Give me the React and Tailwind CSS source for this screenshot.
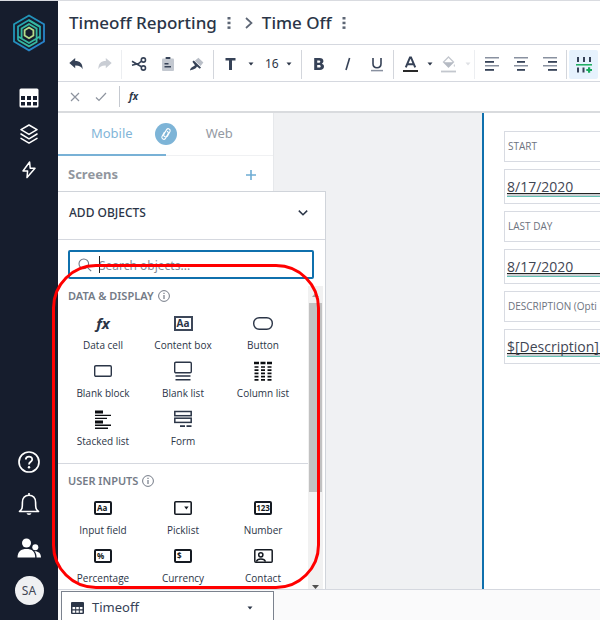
import React from "react";

const ink = "#364257";

function Svg({ w, h, children, className = "", ...rest }) {
  return (
    <svg width={w} height={h} viewBox={`0 0 ${w} ${h}`} fill="none" className={`shrink-0 ${className}`} aria-hidden="true" {...rest}>
      {children}
    </svg>
  );
}

function Logo() {
  return (
    <Svg w={34} h={38} strokeWidth="1.8">
      <defs>
        <linearGradient id="outer" x1="0" y1="0" x2="1" y2="1">
          <stop offset="0" stopColor="#1f9bb0" />
          <stop offset="1" stopColor="#2a7fd0" />
        </linearGradient>
      </defs>
      <path d="M17 1.5L32 10.2V27.6L17 36.4L2 27.6V10.2Z" stroke="url(#outer)" />
      <path d="M6 26V12.4L17 6L28 12.4V25.4" stroke="#27a6b0" />
      <path d="M6 22.5L17 29L28 22.5M6 26L17 32.4L24.6 28V14.6L17 10.1L9.6 14.4V24" stroke="#35b8a0" />
      <path d="M17 6.5L28 13" stroke="#35b8a0" />
      <path d="M17 13.6L21.4 16.2V21.6L17 24.2L12.6 21.6V16.2Z" stroke="#b4dc8a" />
    </Svg>
  );
}

function Caret({ color = "#2c3648" }) {
  return (
    <Svg w={6} h={4}>
      <path d="M0.5 0.5H5.5L3 3.5Z" fill={color} />
    </Svg>
  );
}

function Dots() {
  return (
    <Svg w={4} h={14}>
      <rect x="0.5" y="1" width="3" height="2.5" fill="#5d6675" />
      <rect x="0.5" y="5.7" width="3" height="2.5" fill="#5d6675" />
      <rect x="0.5" y="10.4" width="3" height="2.5" fill="#5d6675" />
    </Svg>
  );
}

function Fx({ className }) {
  return <span className={`font-['Noto_Sans',sans-serif] font-bold italic ${className}`}>fx</span>;
}

function RailButton({ label, children, className = "" }) {
  return (
    <button type="button" aria-label={label} className={`flex w-full items-center justify-center ${className}`}>
      {children}
    </button>
  );
}

function Rail() {
  return (
    <nav className="flex w-[58px] shrink-0 flex-col items-center bg-[#161d2d] pt-[13px] pb-2">
      <a href="#home" aria-label="Home"><Logo /></a>
      <div className="mt-7 flex w-full flex-col">
        <RailButton label="Tables" className="h-9">
          <Svg w={20} h={20}>
            <rect x="0.5" y="0.5" width="19" height="19" rx="1.5" fill="#fff" />
            <path d="M2 8h4v4H2zM8 8h4v4H8zM14 8h4v4h-4zM2 14h4v3.5H2zM8 14h4v3.5H8zM14 14h4v3.5h-4z" fill="#161d2d" />
          </Svg>
        </RailButton>
        <RailButton label="Apps" className="h-9">
          <Svg w={18} h={20} stroke="#fff" strokeWidth="1.5" strokeLinejoin="round" strokeLinecap="round">
            <path d="M9 1L17 5.7L9 10.4L1 5.7Z M1 10L9 14.8L17 10M1 14.3L9 19.1L17 14.3" />
          </Svg>
        </RailButton>
        <RailButton label="Automations" className="h-9">
          <Svg w={14} h={18} stroke="#fff" strokeWidth="1.5" strokeLinejoin="round">
            <path d="M7.6 1L1 10H5.6L5 16.6L13 7.2H8.2Z" />
          </Svg>
        </RailButton>
      </div>
      <div className="mt-auto flex w-full flex-col">
        <RailButton label="Help" className="h-[43px]">
          <Svg w={22} h={22} stroke="#fff" strokeWidth="1.7">
            <circle cx="11" cy="11" r="10" />
            <path d="M7.8 8.6C7.8 4.6 14.2 4.6 14.2 8.4C14.2 10.8 11 10.8 11 13.4" strokeWidth="1.8" />
            <circle cx="11" cy="16.2" r="1.2" fill="#fff" stroke="none" />
          </Svg>
        </RailButton>
        <RailButton label="Notifications" className="h-[43px]">
          <Svg w={22} h={24} stroke="#fff" strokeWidth="1.6" strokeLinejoin="round">
            <path d="M1.5 18.5C4.5 16.5 4.4 14 4.4 9.5C4.4 5 7 2.2 11 2.2S17.6 5 17.6 9.5C17.6 14 17.5 16.5 20.5 18.5Z" />
            <path d="M11 0V2" />
            <path d="M8.6 20.3H13.4C13 22.6 9 22.6 8.6 20.3Z" fill="#fff" stroke="none" />
          </Svg>
        </RailButton>
        <RailButton label="Team" className="h-[43px]">
          <Svg w={24} h={20}>
            <g fill="#fff">
              <circle cx="9.5" cy="5" r="4.5" />
              <path d="M0.5 19.5C0.5 13.5 4 11 9.5 11S18.2 13.5 18.2 19.5Z" />
              <circle cx="18.3" cy="9.3" r="3" />
              <path d="M17.4 13.3C21.5 13.2 24 15.4 24 19.5H19.6C19.6 17 19 14.8 17.4 13.3Z" />
            </g>
          </Svg>
        </RailButton>
        <RailButton label="Account" className="h-[43px]">
          <span className="flex size-[29px] items-center justify-center rounded-full bg-[#eff0f2] text-xs text-[#3f4654]">SA</span>
        </RailButton>
      </div>
    </nav>
  );
}

function Header() {
  return (
    <header className="flex h-11 shrink-0 items-center border-b border-[#d5d8df] pl-[11px] text-[17px] font-medium text-[#2b3547]">
      <h1>Timeoff Reporting</h1>
      <button type="button" aria-label="App menu" className="flex w-6 justify-center"><Dots /></button>
      <Svg w={8} h={12} className="mx-1" stroke="#5d6675" strokeWidth="1.7">
        <path d="M1 1L6.5 6L1 11" />
      </Svg>
      <h2 className="ml-[5px]">Time Off</h2>
      <button type="button" aria-label="Screen menu" className="flex w-6 justify-center"><Dots /></button>
    </header>
  );
}

function Tool({ label, active, children }) {
  return (
    <button
      type="button"
      aria-label={label}
      className={`flex h-[29px] w-[29px] shrink-0 items-center justify-center ${active ? "rounded-xs bg-[#e6f2fd]" : ""}`}
    >
      {children}
    </button>
  );
}

function MenuCaret({ label, color, wide }) {
  return (
    <button type="button" aria-label={label} className={`flex h-[29px] shrink-0 items-center justify-center ${wide ? "w-3" : "w-[9px]"}`}>
      <Caret color={color} />
    </button>
  );
}

function Rule({ light }) {
  return <span className={`mx-[2px] h-[29px] w-px shrink-0 ${light ? "bg-[#eceef1]" : "bg-[#d3d6dc]"}`} />;
}

function Align({ rows }) {
  return (
    <Svg w={16} h={14}>
      {rows.map(([x, w], i) => (
        <rect key={i} x={x} y={i * 4} width={w} height={i % 2 ? 1.8 : 1.5} fill={i % 2 ? "#364257" : "#8991a0"} />
      ))}
    </Svg>
  );
}

function Toolbar() {
  return (
    <div role="toolbar" aria-label="Formatting" className="flex h-[37px] shrink-0 items-center overflow-hidden border-b border-[#d5d8df] pt-[2px] pl-[3px] text-[#364257]">
      <Tool label="Undo">
        <Svg w={14} h={12}><path d="M0.3 5L6.2 0V3C11 3 13.7 5.5 13.6 11.2C12.3 8.5 10.3 7.4 6.2 7.5V10.2Z" fill={ink} /></Svg>
      </Tool>
      <Tool label="Redo">
        <Svg w={14} h={12}><path d="M13.7 5L7.8 0V3C3 3 .3 5.5 .4 11.2C1.7 8.5 3.7 7.4 7.8 7.5V10.2Z" fill="#c9cdd4" /></Svg>
      </Tool>
      <Rule light />
      <Tool label="Cut">
        <Svg w={16} h={14} stroke={ink} strokeWidth="1.6">
          <circle cx="12.4" cy="3" r="2.1" />
          <circle cx="12.4" cy="11" r="2.1" />
          <path d="M10.5 9.8L1 4.2M10.5 4.2L7.5 6.6L1 8.2" />
        </Svg>
      </Tool>
      <Tool label="Paste">
        <Svg w={12} h={14}>
          <rect x="0" y="1.5" width="12" height="12.5" rx="1" fill="#c3c8d0" />
          <rect x="3.5" y="0" width="5" height="2" rx="0.8" fill={ink} />
          <path d="M2.5 6.7H6.5M2.5 9.7H9" stroke={ink} strokeWidth="1.4" />
        </Svg>
      </Tool>
      <Tool label="Paint format">
        <Svg w={15} h={14}>
          <path d="M5.8 3.8L9.4 0.8L14.4 5.6L11.6 9Z" fill="#b9bec7" />
          <path d="M1 13.5C1.4 10.5 3.4 10.3 6 8.2L3.4 4.8L4.8 3.6L12 10.6L10.8 11.8L8 9.6C6.2 12.4 4.4 12.4 1 13.5Z" fill={ink} />
        </Svg>
      </Tool>
      <Rule />
      <Tool label="Text style">
        <Svg w={12} h={12}><path d="M0.5 0H10.5V2.6H7V12H4V2.6H0.5Z" fill={ink} /></Svg>
      </Tool>
      <MenuCaret label="Text style menu" wide />
      <div className="relative w-[42px] shrink-0">
        <select aria-label="Font size" defaultValue="16" className="h-[29px] w-full appearance-none bg-transparent pl-2 text-xs text-[#2b3547]">
          <option>14</option>
          <option>16</option>
          <option>18</option>
        </select>
        <span className="pointer-events-none absolute inset-y-0 right-[7px] flex items-center"><Caret /></span>
      </div>
      <Rule />
      <Tool label="Bold">
        <Svg w={12} h={14}>
          <path d="M1.2 1H6.6C9 1 10.4 2.2 10.4 4.1C10.4 5.4 9.8 6.2 8.8 6.7C10.2 7.1 11 8.1 11 9.6C11 11.8 9.4 13 6.8 13H1.2ZM4.2 3.4V5.8H6C7.8 5.8 7.8 3.4 6 3.4ZM4.2 8V10.6H6.2C8.2 10.6 8.2 8 6.2 8Z" fill={ink} fillRule="evenodd" />
        </Svg>
      </Tool>
      <Tool label="Italic">
        <Svg w={8} h={14}><path d="M5.6 1L2 13" stroke={ink} strokeWidth="1.6" /></Svg>
      </Tool>
      <Tool label="Underline">
        <Svg w={12} h={15}>
          <path d="M2 1V6.8C2 12 10 12 10 6.8V1" stroke={ink} strokeWidth="1.6" />
          <path d="M0 13.6H12" stroke="#8991a0" strokeWidth="1.5" />
        </Svg>
      </Tool>
      <Rule />
      <Tool label="Text colour">
        <Svg w={15} h={16}>
          <path d="M2.8 11.4L7 1.4H8L12.2 11.4M4.4 8.2H10.6" stroke={ink} strokeWidth="2" />
          <path d="M0 15H15" stroke="#111" strokeWidth="1.8" />
        </Svg>
      </Tool>
      <MenuCaret label="Text colour menu" />
      <Tool label="Fill colour">
        <Svg w={15} h={17}>
          <path d="M7.5 1L12.5 6L7.5 11L2.5 6Z" stroke="#c3c7ce" strokeWidth="1.3" />
          <path d="M2.4 6.2H12.6L7.5 11.4Z" fill="#b5bac3" />
          <path d="M13.2 8C15.4 11.6 11.4 11.6 13.2 8Z" fill="#c3c7ce" />
          <path d="M0 15.5H15" stroke="#c3c7ce" strokeWidth="1.8" />
        </Svg>
      </Tool>
      <MenuCaret label="Fill colour menu" color="#dfe1e5" />
      <Rule light />
      <Tool label="Align left"><Align rows={[[1, 14], [1, 9], [1, 14], [1, 9]]} /></Tool>
      <Tool label="Align centre"><Align rows={[[1, 14], [4, 8], [1, 14], [4, 8]]} /></Tool>
      <Tool label="Align right"><Align rows={[[1, 14], [6, 9], [1, 14], [6, 9]]} /></Tool>
      <Rule />
      <Tool label="Insert row" active>
        <Svg w={16} h={17}>
          <path d="M2 1V6M8 1V6M14 1V6M2 11.5V16.5M7.5 11.5V16.5" stroke={ink} strokeWidth="2" />
          <path d="M0 8.8H16" stroke="#18ab5c" strokeWidth="1.5" />
          <path d="M10.3 14H16M13.1 11.2V16.8" stroke="#18ab5c" strokeWidth="2.2" />
        </Svg>
      </Tool>
    </div>
  );
}

function FormulaBar() {
  return (
    <div className="flex h-[31px] shrink-0 items-center border-b-2 border-[#d9dbde] pl-1">
      <button type="button" aria-label="Cancel" className="flex w-[26px] justify-center">
        <Svg w={10} h={10} stroke="#8d939e" strokeWidth="1.2"><path d="M1 1L9 9M9 1L1 9" /></Svg>
      </button>
      <button type="button" aria-label="Accept" className="flex w-[26px] justify-center">
        <Svg w={12} h={10} stroke="#8d939e" strokeWidth="1.2"><path d="M1 5.5L4 8.5L11 1" /></Svg>
      </button>
      <span className="ml-[5px] h-[21px] w-px bg-[#c5c9d0]" />
      <label htmlFor="formula" className="ml-[9px] flex"><Fx className="text-[10px] text-[#2b3547]" /></label>
      <input id="formula" aria-label="Formula" className="ml-2 h-6 min-w-0 flex-1 outline-none" />
    </div>
  );
}

function ScreensPanel() {
  return (
    <aside className="w-[216px] shrink-0 border-r border-[#e6e8eb] bg-white text-[13px]">
      <div role="tablist" className="relative flex h-[43px] border-b border-[#f0f1f3]">
        <button role="tab" aria-selected="true" type="button" className="-mb-px flex-1 border-b-2 border-[#78b1d6] text-[#82b5d8]">Mobile</button>
        <button role="tab" aria-selected="false" type="button" className="flex-1 text-[#949aa3]">Web</button>
        <span className="absolute top-[10px] left-1/2 flex size-[22px] -translate-x-1/2 items-center justify-center rounded-full bg-[#7db4d7]">
          <Svg w={12} h={14} stroke="#fff" strokeWidth="1.1" strokeLinecap="round">
            <path d="M4.6 9.6C3.4 9 3.6 7.6 4.2 6.6L6.6 2.6C7.8 .8 11 2 10 4.6L7.8 8.6C7.2 9.6 6.4 9.8 5.8 9.6M7.4 4.4C8.6 5 8.4 6.4 7.8 7.4L5.4 11.4C4.2 13.2 1 12 2 9.4L4.2 5.4" />
          </Svg>
        </span>
      </div>
      <div className="flex h-[37px] items-center justify-between pr-[17px] pl-[10px]">
        <h3 className="font-bold text-[#91969e]">Screens</h3>
        <button type="button" aria-label="Add screen">
          <Svg w={10} h={10} stroke="#6fadd4" strokeWidth="1.6"><path d="M5 0V10M0 5H10" /></Svg>
        </button>
      </div>
    </aside>
  );
}

function InputGlyph({ text, center }) {
  return (
    <span className={`flex h-[14px] w-[18px] items-center rounded-xs border-2 border-[#151a22] text-[8px] leading-none font-bold text-[#151a22] ${center ? "justify-center" : "pl-px"}`}>
      {text}
    </span>
  );
}

const dark = "#2b3547";

const displayObjects = [
  ["Data cell", <Fx className="text-[15px] leading-none text-[#2b3547]" />],
  ["Content box", <span className="flex h-[15px] w-[19px] items-center justify-center border-2 border-[#3d4759] text-[10px] leading-none font-bold text-[#2b3547]">Aa</span>],
  ["Button", <Svg w={20} h={13} stroke={dark} strokeWidth="1.4"><rect x="0.7" y="0.7" width="18.6" height="11.6" rx="5.5" /></Svg>],
  ["Blank block", <Svg w={18} h={12} stroke={dark} strokeWidth="1.4"><rect x="0.7" y="0.7" width="16.6" height="10.6" rx="1.2" /></Svg>],
  ["Blank list", <Svg w={18} h={20} stroke={dark} strokeWidth="1.4"><rect x="0.7" y="1.2" width="16.6" height="10.6" rx="1.2" /><path d="M1.5 15H16.5M1.5 18.8H16.5" /></Svg>],
  ["Column list", (
    <Svg w={18} h={20} stroke="#0b0d10">
      <path d="M0 2H5M6.5 2H11.5M13 2H18" strokeWidth="2.6" />
      <path d="M0.5 6H4.5M7 6H11M13.5 6H17.5M0.5 9.2H4.5M7 9.2H11M13.5 9.2H17.5M0.5 12.4H4.5M7 12.4H11M13.5 12.4H17.5M0.5 15.6H4.5M7 15.6H11M13.5 15.6H17.5M0.5 18.8H4.5M7 18.8H11M13.5 18.8H17.5" strokeWidth="1.7" />
    </Svg>
  )],
  ["Stacked list", (
    <Svg w={18} h={19} stroke="#0b0d10">
      <path d="M1 2H9M1 12H9" strokeWidth="2.8" />
      <path d="M1 5.4H17M1 8.4H13M1 15.2H17M1 18.2H14" strokeWidth="1.4" />
    </Svg>
  )],
  ["Form", (
    <Svg w={18} h={18} stroke={dark} strokeWidth="1.5">
      <rect x="0.8" y="1.5" width="16.4" height="4.2" />
      <rect x="0.8" y="8.2" width="16.4" height="4.2" />
      <path d="M6 16.2H11M12.5 16.2H17.5" strokeWidth="1.7" />
    </Svg>
  )],
];

const inputObjects = [
  ["Input field", <InputGlyph text="Aa" />],
  ["Picklist", <Svg w={18} h={14} stroke="#151a22" strokeWidth="1.6"><rect x="0.8" y="0.8" width="16.4" height="12.4" rx="1" /><path d="M10.2 5.6H14.6L12.4 8.6Z" fill="#151a22" stroke="none" /></Svg>],
  ["Number", <InputGlyph text="123" center />],
  ["Percentage", <InputGlyph text="%" />],
  ["Currency", <InputGlyph text="$" />],
  ["Contact", <Svg w={19} h={14} stroke="#151a22" strokeWidth="1.5"><rect x="0.8" y="0.8" width="17.4" height="12.4" rx="1" /><circle cx="6.8" cy="5.8" r="2.1" /><path d="M2.4 12.6C3.4 9.2 10.4 9.2 11.4 12.6" /></Svg>],
];

function ObjectGroup({ title, items, className }) {
  return (
    <section className={className}>
      <h4 className="mb-[5px] flex h-5 items-center gap-1 pl-[10px] text-[11px] font-semibold text-[#747b87]">
        {title}
        <Svg w={12} h={12} stroke="#747b87">
          <circle cx="6" cy="6" r="5.4" />
          <path d="M6 5V9M6 2.8V4" strokeWidth="1.2" />
        </Svg>
      </h4>
      <div className="grid grid-cols-3 px-[5px]">
        {items.map(([name, icon]) => (
          <button key={name} type="button" className="flex h-12 flex-col items-center font-['Open_Sans',sans-serif] text-[10px] whitespace-nowrap text-[#2b3547]">
            <span className="flex h-6 items-center">{icon}</span>
            <span className="leading-5">{name}</span>
          </button>
        ))}
      </div>
    </section>
  );
}

function ObjectsPanel() {
  return (
    <section className="absolute top-[78px] bottom-0 left-0 z-10 flex w-[268px] flex-col border-t border-r border-[#d0d4da] bg-white">
      <button type="button" aria-expanded="true" className="flex h-[48px] shrink-0 items-center justify-between border-b border-[#d5d8df] pr-[17px] pb-[5px] pl-[11px] text-xs font-medium text-[#2b3547]">
        ADD OBJECTS
        <Svg w={10} h={6} stroke={dark} strokeWidth="1.5"><path d="M0.8 0.6L5 4.8L9.2 0.6" /></Svg>
      </button>
      <div className="relative mt-[10px] mr-[11px] mb-[7px] ml-[10px] h-[29px] shrink-0">
        <label htmlFor="search" className="absolute top-[8px] left-[10px]">
          <Svg w={14} h={14} stroke="#6f7784" strokeWidth="1.1"><circle cx="5.8" cy="5.8" r="4.8" /><path d="M9.3 9.3L13.2 13.2" /></Svg>
        </label>
        <input
          id="search"
          type="text"
          aria-label="Search objects"
          placeholder="Search objects..."
          className="h-full w-full rounded-xs border-2 border-[#0f70ad] bg-transparent pt-px pl-[29px] text-xs text-[#364257] outline-none placeholder:text-[#858b95]"
        />
        <span className="absolute top-[6px] left-[31px] h-[17px] w-px bg-[#222]" />
      </div>
      <div className="flex min-h-0 flex-1">
        <div className="min-w-0 flex-1 overflow-hidden">
          <ObjectGroup title="DATA & DISPLAY" items={displayObjects} className="pb-2" />
          <ObjectGroup title="USER INPUTS" items={inputObjects} className="border-t border-[#d5d8df] pt-[7px]" />
        </div>
        <div className="mr-[2px] flex w-[15px] flex-col items-center bg-[#f1f1f1]">
          <span className="flex h-[17px] items-center"><Svg w={7} h={4}><path d="M0 4L3.5 0L7 4Z" fill="#a3a3a3" /></Svg></span>
          <span className="h-[189px] w-[13px] bg-[#c1c1c1]" />
          <span className="mt-auto flex h-[4px] items-end"><Svg w={7} h={4}><path d="M0 0H7L3.5 4Z" fill="#505050" /></Svg></span>
        </div>
      </div>
    </section>
  );
}

const fields = [
  ["START", "8/17/2020"],
  ["LAST DAY", "8/17/2020"],
  ["DESCRIPTION (Opti", "$[Description]"],
];

function Canvas() {
  return (
    <div className="flex min-w-0 flex-1 bg-[#f0f1f3] pl-[208px] font-['Open_Sans',sans-serif]">
      <form className="flex min-w-0 flex-1 flex-col gap-[7px] overflow-hidden border-l-2 border-[#0f70ad] bg-white pt-[18px] pl-5">
        {fields.map(([label, value]) => (
          <React.Fragment key={label}>
            <label htmlFor={label} className="flex h-[31px] shrink-0 items-center overflow-hidden border border-r-0 border-[#d8dbe2] pl-[3px] text-[10px] whitespace-nowrap text-[#6d7380]">
              {label}
            </label>
            <div className="h-[35px] shrink-0 border border-r-0 border-[#d8dbe2] pl-[2px]">
              <input
                id={label}
                defaultValue={value}
                className="h-[33px] w-full bg-[linear-gradient(#222_0_1px,#c9ccd0_1px_3px,#66c2b5_3px_4px)] bg-[length:100%_4px] bg-[position:0_23px] bg-no-repeat text-[14px] text-[#3f4654] outline-none"
              />
            </div>
          </React.Fragment>
        ))}
      </form>
    </div>
  );
}

function SheetTabs() {
  return (
    <footer className="flex h-[31px] shrink-0 border-t border-[#d5d8df] bg-[#fafafb] pt-px pl-[3px]">
      <button type="button" className="flex w-[213px] items-center border border-b-0 border-[#7b828e] bg-white pt-1 pr-5 pl-[9px] text-[13px] text-[#364257]">
        <Svg w={13} h={12}>
          <rect width="13" height="12" rx="1" fill={dark} />
          <path d="M1.5 5H4.2V7.2H1.5ZM5.2 5H7.8V7.2H5.2ZM8.8 5H11.5V7.2H8.8ZM1.5 8.4H4.2V10.8H1.5ZM5.2 8.4H7.8V10.8H5.2ZM8.8 8.4H11.5V10.8H8.8Z" fill="#fff" />
        </Svg>
        <span className="mr-auto ml-2">Timeoff</span>
        <Caret />
      </button>
    </footer>
  );
}

export default function App() {
  return (
    <div className="relative flex h-screen overflow-hidden border-t border-[#d9dbe0] bg-white font-['Noto_Sans','Open_Sans',sans-serif]">
      <Rail />
      <main className="flex min-w-0 flex-1 flex-col">
        <Header />
        <Toolbar />
        <FormulaBar />
        <div className="relative flex min-h-0 flex-1">
          <ScreensPanel />
          <Canvas />
          <ObjectsPanel />
        </div>
        <SheetTabs />
      </main>
      <div className="pointer-events-none absolute top-[263px] left-[52px] z-20 h-[325px] w-[268px] rounded-[44px] border-3 border-[#ff0000]" />
    </div>
  );
}
